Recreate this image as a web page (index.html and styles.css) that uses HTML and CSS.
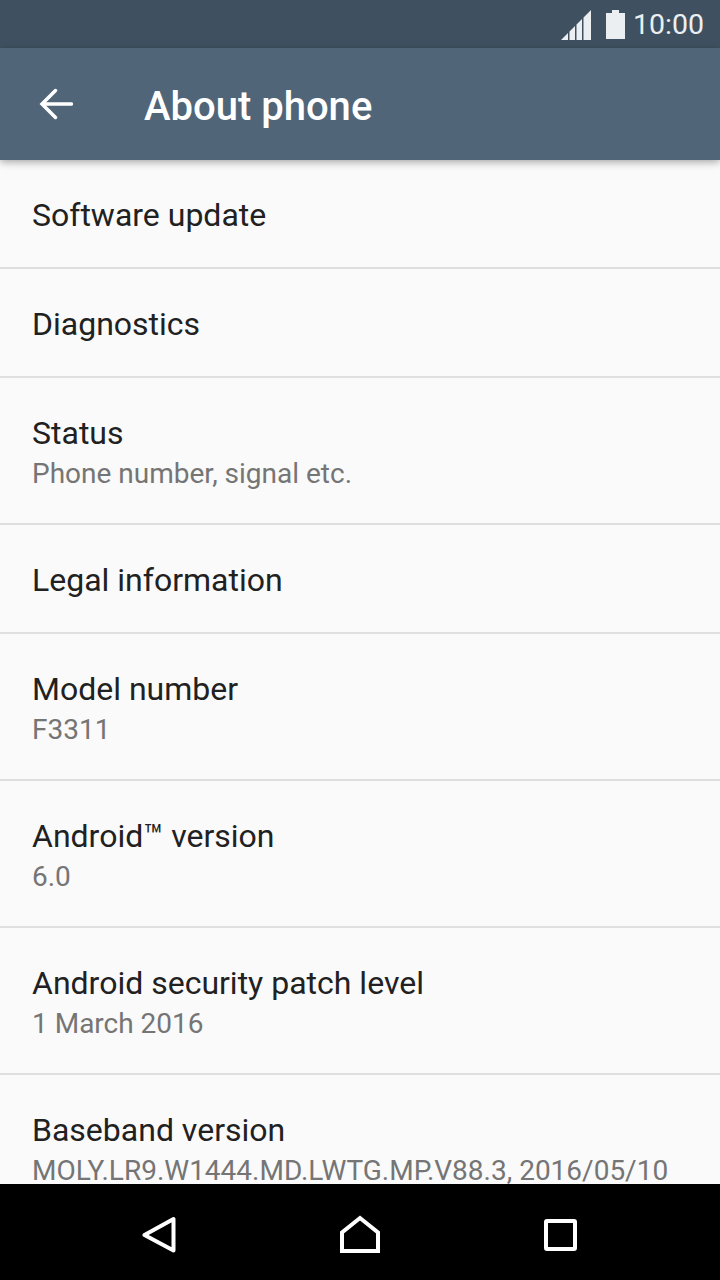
FILE: index.html
```html
<!DOCTYPE html>
<html lang="en">
<head>
<meta charset="utf-8">
<title>About phone</title>
<link rel="stylesheet" href="styles.css">
</head>
<body>
<div class="screen">
  <header class="status-bar">
    <svg class="signal" width="30" height="30" viewBox="0 0 30 30"><path d="M0 30 7 23V30ZM8.500 21.500 14 16V30H8.500ZM15.500 14.500 21 9V30H15.500ZM22.500 7.500 30 0V30H22.500Z" fill="#eceff1"/></svg>
    <svg class="battery" width="19" height="29" viewBox="0 0 19 29"><path d="M6 0H13V3H19V29H0V3H6Z" fill="#eceff1"/></svg>
    <span class="clock">10:00</span>
  </header>
  <div class="app-bar">
    <svg class="back" width="34" height="32" viewBox="0 0 34 32"><path d="M3 16H32.500M16.500 2.500 3 16 16.500 29.500" fill="none" stroke="#fff" stroke-width="3.500" stroke-linecap="round"/></svg>
    <h1 class="title">About phone</h1>
  </div>
  <main class="list">
    <div class="row"><div class="label">Software update</div></div>
    <div class="row"><div class="label">Diagnostics</div></div>
    <div class="row row-two"><div class="label">Status</div><div class="sub">Phone number, signal etc.</div></div>
    <div class="row"><div class="label">Legal information</div></div>
    <div class="row row-two"><div class="label">Model number</div><div class="sub">F3311</div></div>
    <div class="row row-two"><div class="label">Android™ version</div><div class="sub">6.0</div></div>
    <div class="row row-two"><div class="label">Android security patch level</div><div class="sub">1 March 2016</div></div>
    <div class="row row-two row-last"><div class="label">Baseband version</div><div class="sub">MOLY.LR9.W1444.MD.LWTG.MP.V88.3, 2016/05/10</div></div>
  </main>
  <nav class="nav-bar">
    <svg width="34" height="38" viewBox="0 0 34 38"><path d="M2.500 20 31.500 4V35.500Z" fill="none" stroke="#fff" stroke-width="4" stroke-linejoin="round"/></svg>
    <svg width="40" height="38" viewBox="0 0 40 38"><path d="M2 36V17.500L20 3 38 17.500V36Z" fill="none" stroke="#fff" stroke-width="4"/></svg>
    <svg width="34" height="38" viewBox="0 0 34 38"><rect x="2" y="6" width="29" height="28" rx="1" fill="none" stroke="#fff" stroke-width="4"/></svg>
  </nav>
</div>
</body>
</html>
```

FILE: styles.css
```css
* { box-sizing: border-box; }
html, body { margin: 0; padding: 0; }
body { font-family: Roboto, "Noto Sans", sans-serif; background: #fafafa; }
.screen { width: 720px; height: 1280px; display: flex; flex-direction: column; overflow: hidden; background: #fafafa; }
.status-bar { height: 48px; flex: none; background: #3f5161; display: flex; align-items: center; justify-content: flex-end; padding-right: 16px; color: #eceff1; }
.signal { margin-right: 15px; margin-top: 2px; }
.battery { margin-right: 8px; }
.clock { font-size: 28.500px; line-height: 48px; margin-top: 2px; }
.app-bar { height: 112px; flex: none; background: #516578; display: flex; align-items: center; padding-left: 39px; box-shadow: 0 2px 8px rgba(0,0,0,.35); position: relative; z-index: 1; }
.back { margin-right: 71px; }
.title { margin: 0; font-size: 40px; font-weight: 500; color: #fff; line-height: 1; margin-top: 6px; }
.list { flex: 1; min-height: 0; overflow: hidden; }
.row { height: 109px; padding: 2px 32px 0; border-bottom: 2px solid #dfdfdf; display: flex; flex-direction: column; justify-content: center; }
.row-two { height: 147px; padding-top: 5px; }
.row-last { border-bottom: 0; justify-content: flex-start; padding-top: 35px; }
.label { font-size: 32px; line-height: 40px; color: #212121; white-space: nowrap; }
.sub { font-size: 28px; line-height: 40px; margin-top: 1px; color: #757575; white-space: nowrap; }
.nav-bar { height: 96px; flex: none; background: #000; display: flex; align-items: center; justify-content: space-between; padding: 4px 142px 0 142px; }
```
